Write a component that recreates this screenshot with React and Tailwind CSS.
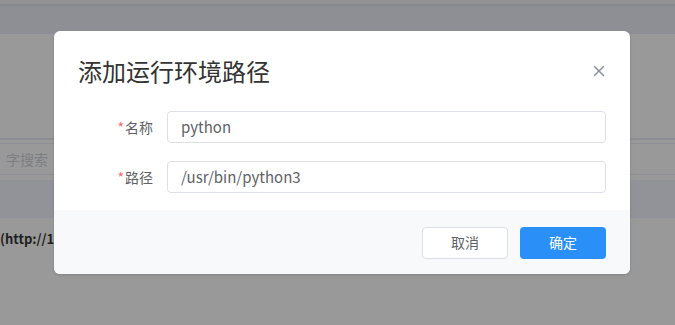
import { X } from "lucide-react";

const font = { fontFamily: '"Noto Sans CJK SC", "Noto Sans", sans-serif' };

function Field({ label, value }) {
  return (
    <div className="flex items-center">
      <label className="w-[98px] pr-[14px] text-right text-[14px] text-[#606266]">
        <span className="text-[#f56c6c] mr-[1px]">*</span>
        {label}
      </label>
      <div className="flex-1 h-[32px] flex items-center rounded-[4px] border border-[#dcdfe6] px-[13px] text-[15px] text-[#606266]">
        {value}
      </div>
    </div>
  );
}

export default function App() {
  return (
    <div className="relative w-[675px] h-[325px] overflow-hidden bg-[#999999]" style={font}>
      {/* dimmed page behind */}
      <div className="flex flex-col">
        <div className="h-[4px] bg-[#939396]" />
        <div className="h-[2px] bg-[#87888c]" />
        <div className="h-[28px] bg-[#8e8f94]" />
        <div className="h-[104px]" />
        <div className="h-[2px] bg-[#8c8d92]" />
        <div className="h-[3px]" />
        <div className="h-[1px] bg-[#8e8f94]" />
        <div className="h-[30px] flex items-center text-[14px] text-[#7d7e83] pl-[6px]">字搜索</div>
        <div className="h-[1px] bg-[#8e8f94]" />
        <div className="h-[5px]" />
        <div className="h-[38px] bg-[#929398]" />
        <div className="h-[12px]" />
        <div className="text-[13px] font-bold text-[#1f1f1f] leading-[18px]">(http://192.168.1.10)</div>
      </div>

      {/* dialog */}
      <div className="absolute left-[54px] top-[31px] w-[576px] h-[243px] rounded-[6px] bg-white overflow-hidden flex flex-col shadow-[0_1px_3px_rgba(0,0,0,0.15)]">
        <div className="flex items-center justify-between px-[24px] h-[80px]">
          <h2 className="text-[24px] leading-[28px] text-[#333333]">添加运行环境路径</h2>
          <X size={18} strokeWidth={2} className="text-[#8a8f99] mr-[-2px]" />
        </div>
        <div className="flex flex-col gap-[18px] pl-[15px] pr-[24px]">
          <Field label="名称" value="python" />
          <Field label="路径" value="/usr/bin/python3" />
        </div>
        <div className="mt-auto h-[64px] bg-[#f8f9fb] flex items-center justify-end gap-[12px] pr-[24px] pt-[1px]">
          <button className="w-[86px] h-[32px] rounded-[4px] border border-[#dcdfe6] bg-white text-[14px] text-[#606266]">
            取消
          </button>
          <button className="w-[86px] h-[32px] rounded-[4px] bg-[#2a8ff7] text-[14px] text-white">
            确定
          </button>
        </div>
      </div>
    </div>
  );
}
